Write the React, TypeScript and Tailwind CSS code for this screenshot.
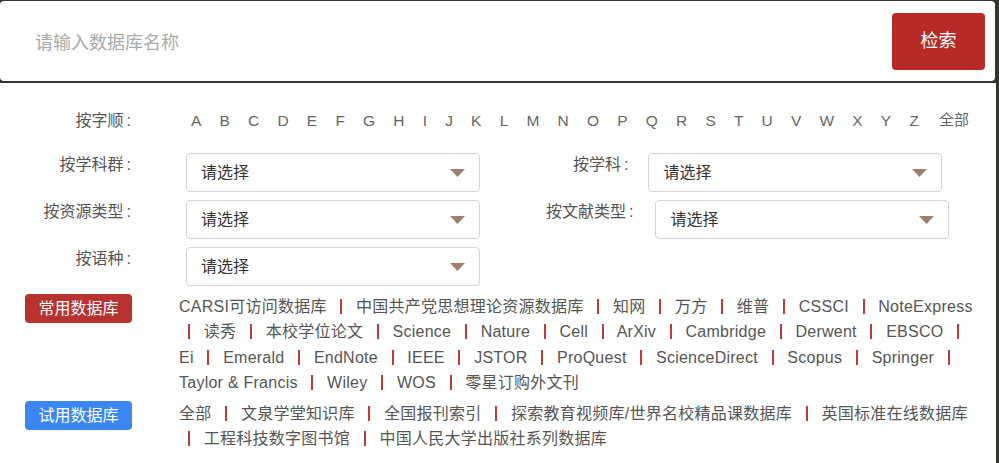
import { Fragment } from 'react';

const letters = 'ABCDEFGHIJKLMNOPQRSTUVWXYZ'.split('');

const common = [
  'CARSI可访问数据库', '中国共产党思想理论资源数据库', '知网', '万方', '维普', 'CSSCI', 'NoteExpress',
  '读秀', '本校学位论文', 'Science', 'Nature', 'Cell', 'ArXiv', 'Cambridge', 'Derwent', 'EBSCO',
  'Ei', 'Emerald', 'EndNote', 'IEEE', 'JSTOR', 'ProQuest', 'ScienceDirect', 'Scopus', 'Springer',
  'Taylor & Francis', 'Wiley', 'WOS', '零星订购外文刊',
];

const trial = [
  '全部', '文泉学堂知识库', '全国报刊索引', '探索教育视频库/世界名校精品课数据库', '英国标准在线数据库',
  '工程科技数字图书馆', '中国人民大学出版社系列数据库',
];

function Label({ text }: { text: string }) {
  return (
    <span className="text-[16px] leading-[24px] text-[#555] whitespace-nowrap">
      {text}
      <span className="ml-[3px]">:</span>
    </span>
  );
}

function Select() {
  return (
    <div className="w-[294px] h-[39px] rounded-[4px] border border-[#d4d4d4] bg-white flex items-center justify-between pl-[14px] pr-[14px]">
      <span className="text-[16px] text-[#333]">请选择</span>
      <svg width="15" height="8" viewBox="0 0 15 8">
        <polygon points="0,0 15,0 7.5,8" fill="#a07f70" />
      </svg>
    </div>
  );
}

function LinkList({ items }: { items: string[] }) {
  return (
    <div className="ml-[47px] w-[801px] text-[16px] leading-[25.3px] tracking-[0.25px] text-[#555]">
      {items.map((t, i) => (
        <Fragment key={t}>
          {i > 0 && (
            <>
              {' '}
              <span className="px-[9px]">
                <span className="inline-block w-[2px] h-[15px] bg-[#c23a3a] align-[-2px]" />
              </span>{' '}
            </>
          )}
          <span className="whitespace-nowrap">{t}</span>
        </Fragment>
      ))}
    </div>
  );
}

export default function App() {
  return (
    <div className="w-[999px] h-[463px] overflow-hidden bg-[#33362d] pt-px font-['Liberation_Sans','Noto_Sans_CJK_SC',sans-serif]">
      {/* Search bar */}
      <div className="mr-[4px] h-[80px] bg-white rounded-[4px] flex items-center pl-[35px] pr-[10px]">
        <input
          className="flex-1 mt-[5px] bg-transparent outline-none text-[18px] text-[#333] placeholder:text-[#aaa]"
          placeholder="请输入数据库名称"
        />
        <button className="w-[93px] h-[57px] rounded-[4px] bg-[#b82a28] text-white text-[18px]">检索</button>
      </div>

      {/* Filters */}
      <div className="mt-[2px] mr-[3px] h-[380px] bg-white pt-[26px]">
        <div className="flex items-center h-[24px]">
          <div className="w-[131px] text-right">
            <Label text="按字顺" />
          </div>
          <div className="ml-[60px] flex gap-[18.2px] text-[15.5px] text-[#666]">
            {letters.map((l) => (
              <span key={l}>{l}</span>
            ))}
            <span className="ml-[2px] text-[15px]">全部</span>
          </div>
        </div>

        <div className="mt-[20px] flex flex-col gap-[8px]">
          <div className="flex items-start">
            <div className="w-[131px] text-right"><Label text="按学科群" /></div>
            <div className="ml-[55px]"><Select /></div>
            <div className="ml-[93px]"><Label text="按学科" /></div>
            <div className="ml-[20px]"><Select /></div>
          </div>
          <div className="flex items-start">
            <div className="w-[131px] text-right"><Label text="按资源类型" /></div>
            <div className="ml-[55px]"><Select /></div>
            <div className="ml-[66px]"><Label text="按文献类型" /></div>
            <div className="ml-[22px]"><Select /></div>
          </div>
          <div className="flex items-start">
            <div className="w-[131px] text-right"><Label text="按语种" /></div>
            <div className="ml-[55px]"><Select /></div>
          </div>
        </div>

        <div className="mt-[8px] flex items-start">
          <span className="ml-[25px] w-[107px] h-[29px] rounded-[4px] bg-[#b73331] text-white text-[16px] flex items-center justify-center shrink-0">
            常用数据库
          </span>
          <LinkList items={common} />
        </div>

        <div className="mt-[6px] flex items-start">
          <span className="ml-[25px] w-[107px] h-[29px] rounded-[4px] bg-[#3b86f3] text-white text-[16px] flex items-center justify-center shrink-0">
            试用数据库
          </span>
          <LinkList items={trial} />
        </div>
      </div>
    </div>
  );
}
